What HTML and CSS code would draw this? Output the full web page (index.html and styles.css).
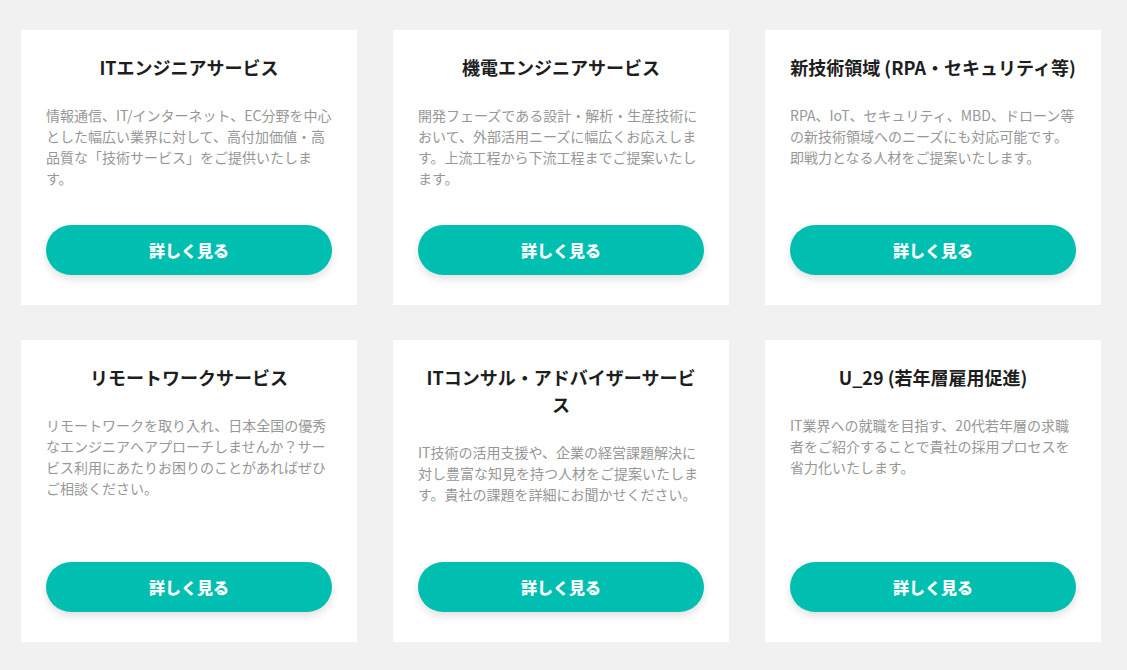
FILE: index.html
```html
<!DOCTYPE html>
<html lang="ja">
<head>
<meta charset="utf-8">
<title>サービス</title>
<link rel="stylesheet" href="styles.css">
</head>
<body>
<main class="services">
  <section class="card">
    <h2 class="card-title">ITエンジニアサービス</h2>
    <p class="card-text">情報通信、IT/インターネット、EC分野を中心とした幅広い業界に対して、高付加価値・高品質な「技術サービス」をご提供いたします。</p>
    <a class="card-btn" href="#">詳しく見る</a>
  </section>
  <section class="card">
    <h2 class="card-title">機電エンジニアサービス</h2>
    <p class="card-text">開発フェーズである設計・解析・生産技術において、外部活用ニーズに幅広くお応えします。上流工程から下流工程までご提案いたします。</p>
    <a class="card-btn" href="#">詳しく見る</a>
  </section>
  <section class="card">
    <h2 class="card-title">新技術領域 (RPA・セキュリティ等)</h2>
    <p class="card-text">RPA、IoT、セキュリティ、MBD、ドローン等の新技術領域へのニーズにも対応可能です。即戦力となる人材をご提案いたします。</p>
    <a class="card-btn" href="#">詳しく見る</a>
  </section>
  <section class="card">
    <h2 class="card-title">リモートワークサービス</h2>
    <p class="card-text">リモートワークを取り入れ、日本全国の優秀なエンジニアへアプローチしませんか？サービス利用にあたりお困りのことがあればぜひご相談ください。</p>
    <a class="card-btn" href="#">詳しく見る</a>
  </section>
  <section class="card">
    <h2 class="card-title">ITコンサル・アドバイザーサービス</h2>
    <p class="card-text">IT技術の活用支援や、企業の経営課題解決に対し豊富な知見を持つ人材をご提案いたします。貴社の課題を詳細にお聞かせください。</p>
    <a class="card-btn" href="#">詳しく見る</a>
  </section>
  <section class="card">
    <h2 class="card-title">U_29 (若年層雇用促進)</h2>
    <p class="card-text">IT業界への就職を目指す、20代若年層の求職者をご紹介することで貴社の採用プロセスを省力化いたします。</p>
    <a class="card-btn" href="#">詳しく見る</a>
  </section>
</main>
</body>
</html>
```

FILE: styles.css
```css
* {
  box-sizing: border-box;
}

html, body {
  margin: 0;
  padding: 0;
}

body {
  background: #f1f1f1;
  font-family: "Noto Sans CJK JP", "Noto Sans", sans-serif;
  color: #222;
}

.services {
  display: grid;
  grid-template-columns: repeat(3, 336px);
  column-gap: 36px;
  row-gap: 35px;
  padding: 30px 0 0 21px;
}

.card {
  background: #fff;
  display: flex;
  flex-direction: column;
  padding: 24px 25px 30px;
}

.card-title {
  margin: 0 0 24px;
  font-size: 18px;
  line-height: 27px;
  font-weight: 700;
  text-align: center;
  color: #1e1e1e;
}

.card-text {
  margin: 0 0 36px;
  min-height: 84px;
  font-size: 14px;
  line-height: 21px;
  color: #979797;
}

.card-btn {
  margin-top: auto;
  display: flex;
  align-items: center;
  justify-content: center;
  height: 50px;
  border-radius: 25px;
  background: #00bfb1;
  color: #fff;
  font-size: 16px;
  font-weight: 900;
  text-decoration: none;
  box-shadow: 0 4px 8px rgba(0, 0, 0, 0.12);
}
```
